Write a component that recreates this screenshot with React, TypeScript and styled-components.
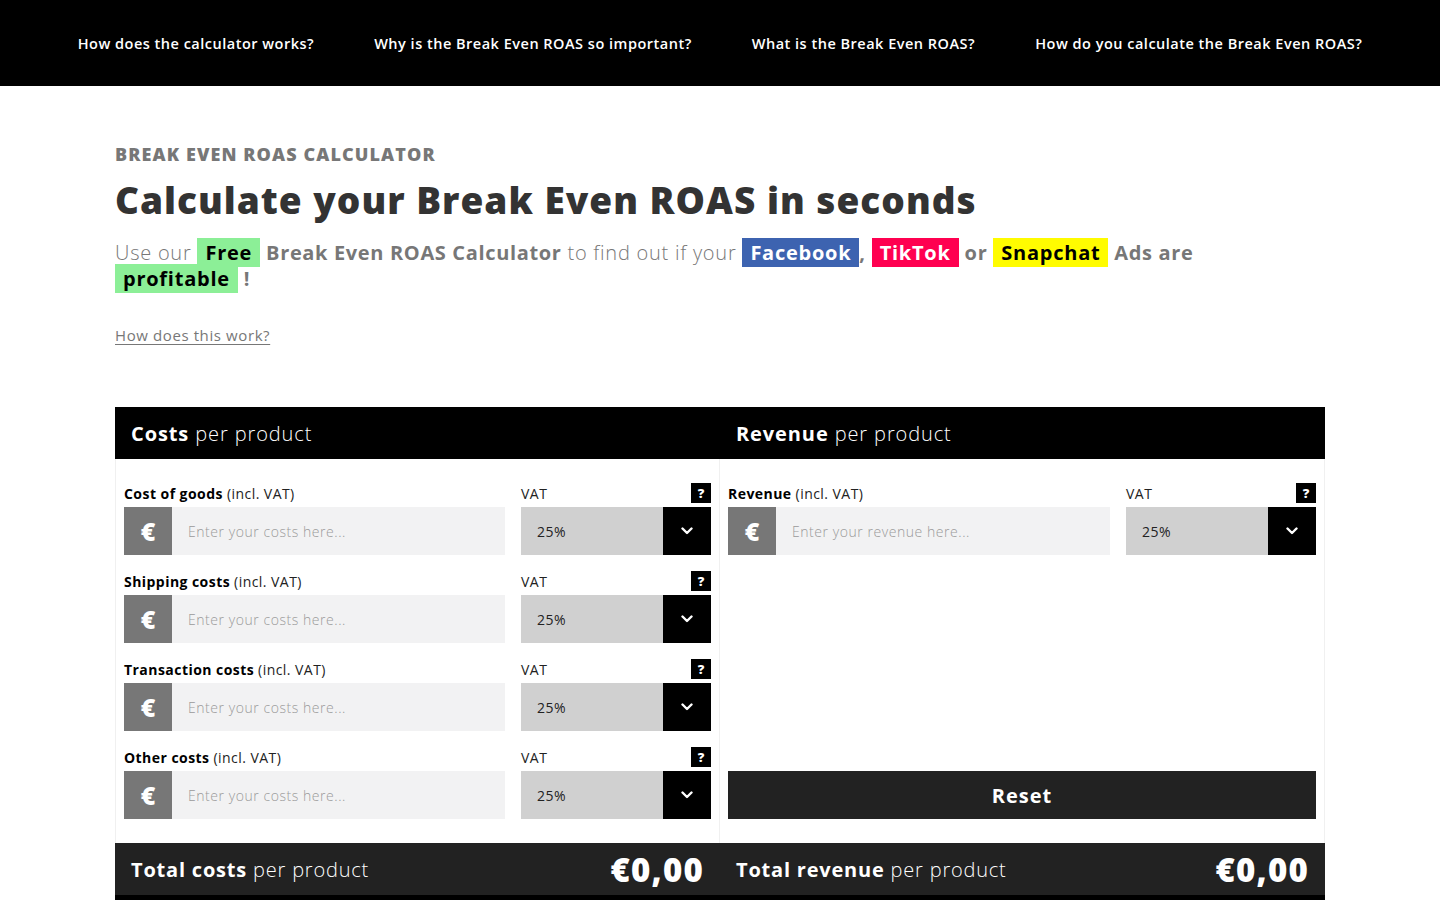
import styled, { createGlobalStyle } from 'styled-components';

const GlobalStyle = createGlobalStyle`
  body {
    margin: 0;
    background: #fff;
    font-family: 'Open Sans', 'Liberation Sans', sans-serif;
    color: #222;
    letter-spacing: 0.5px;
  }
  * {
    box-sizing: border-box;
  }
`;

const navLinks = [
  'How does the calculator works?',
  'Why is the Break Even ROAS so important?',
  'What is the Break Even ROAS?',
  'How do you calculate the Break Even ROAS?',
];

const costRows = ['Cost of goods', 'Shipping costs', 'Transaction costs', 'Other costs'];

function Chevron() {
  return (
    <svg width="12" height="8" viewBox="0 0 12 8" fill="none">
      <polyline
        points="1.5,1.5 6,6 10.5,1.5"
        stroke="#fff"
        strokeWidth="2.4"
        strokeLinecap="round"
        strokeLinejoin="round"
      />
    </svg>
  );
}

function Field({ name, placeholder }: { name: string; placeholder: string }) {
  return (
    <FieldGroup>
      <FieldLabel>
        <strong>{name}</strong> (incl. VAT)
      </FieldLabel>
      <VatLabel>
        VAT
        <HelpBox>?</HelpBox>
      </VatLabel>
      <AmountBox>
        <EuroBox>€</EuroBox>
        <AmountInput placeholder={placeholder} />
      </AmountBox>
      <VatSelect>
        <VatValue>25%</VatValue>
        <ChevronBox>
          <Chevron />
        </ChevronBox>
      </VatSelect>
    </FieldGroup>
  );
}

export default function App() {
  return (
    <>
      <GlobalStyle />
      <TopNav>
        {navLinks.map((l) => (
          <NavLink key={l} href="#">
            {l}
          </NavLink>
        ))}
      </TopNav>
      <Main>
        <Kicker>Break Even ROAS Calculator</Kicker>
        <Heading>Calculate your Break Even ROAS in seconds</Heading>
        <Intro>
          Use our <Mark $bg="#8cef97">Free</Mark> <b>Break Even ROAS Calculator</b> to find out if your{' '}
          <Mark $bg="#3d63b0" $color="#fff">Facebook</Mark><b>,</b>{' '}
          <Mark $bg="#ff0050" $color="#fff">TikTok</Mark> <b>or</b>{' '}
          <Mark $bg="#fffc00">Snapchat</Mark> <b>Ads are</b>{' '}
          <Mark $bg="#8cef97">profitable</Mark> <b>!</b>
        </Intro>
        <HowLink href="#">How does this work?</HowLink>

        <Panel>
          <PanelHeader>
            <HeaderCell>
              <b>Costs</b> per product
            </HeaderCell>
            <HeaderCell>
              <b>Revenue</b> per product
            </HeaderCell>
          </PanelHeader>
          <PanelBody>
            <Column $first>
              {costRows.map((r) => (
                <Field key={r} name={r} placeholder="Enter your costs here..." />
              ))}
            </Column>
            <Column $spread>
              <Field name="Revenue" placeholder="Enter your revenue here..." />
              <ResetButton>Reset</ResetButton>
            </Column>
          </PanelBody>
          <PanelFooter>
            <TotalCell>
              <span>
                <b>Total costs</b> per product
              </span>
              <TotalAmount>€0,00</TotalAmount>
            </TotalCell>
            <TotalCell>
              <span>
                <b>Total revenue</b> per product
              </span>
              <TotalAmount>€0,00</TotalAmount>
            </TotalCell>
          </PanelFooter>
          <PanelBottom />
        </Panel>
      </Main>
    </>
  );
}

const TopNav = styled.nav`
  height: 86px;
  background: #000;
  display: flex;
  align-items: center;
  justify-content: center;
  gap: 60px;
`;

const NavLink = styled.a`
  color: #fff;
  text-decoration: none;
  font-family: 'Open Sans', sans-serif;
  font-size: 14.5px;
  font-weight: 600;
  letter-spacing: 0.5px;
`;

const Main = styled.main`
  width: 1210px;
  margin: 0 auto;
  padding-top: 56px;
  display: flex;
  flex-direction: column;
  align-items: flex-start;
`;

const Kicker = styled.div`
  font-size: 18px;
  line-height: 24px;
  font-weight: 800;
  color: #777;
  text-transform: uppercase;
  letter-spacing: 1.1px;
`;

const Heading = styled.h1`
  margin: 12px 0 0;
  font-size: 37px;
  line-height: 44px;
  font-weight: 800;
  color: #333;
  letter-spacing: 1px;
`;

const Intro = styled.p`
  margin: 18px 0 0;
  max-width: 1140px;
  font-size: 20px;
  line-height: 26px;
  font-weight: 300;
  color: #777;
  letter-spacing: 0.75px;

  b {
    font-weight: 700;
    letter-spacing: 0.65px;
  }
`;

const Mark = styled.span<{ $bg: string; $color?: string }>`
  background: ${(p) => p.$bg};
  color: ${(p) => p.$color || '#000'};
  font-weight: 700;
  letter-spacing: 0.75px;
  padding: 1px 8px;
`;

const HowLink = styled.a`
  margin-top: 33px;
  font-size: 15px;
  line-height: 20px;
  font-weight: 400;
  color: #777;
  letter-spacing: 0.6px;
  text-decoration: underline;
  text-underline-offset: 3px;
`;

const Panel = styled.section`
  margin-top: 62px;
  width: 100%;
`;

const PanelHeader = styled.div`
  display: grid;
  grid-template-columns: 1fr 1fr;
  height: 52px;
  background: #000;
  color: #fff;
`;

const HeaderCell = styled.div`
  display: flex;
  align-items: center;
  gap: 6px;
  padding-left: 16px;
  font-size: 20px;
  font-weight: 300;
  letter-spacing: 0.9px;

  b {
    font-weight: 700;
  }
`;

const PanelBody = styled.div`
  display: grid;
  grid-template-columns: 1fr 1fr;
`;

const Column = styled.div<{ $spread?: boolean; $first?: boolean }>`
  display: flex;
  flex-direction: column;
  justify-content: ${(p) => (p.$spread ? 'space-between' : 'flex-start')};
  gap: 16px;
  padding: 24px 8px;
  border-left: ${(p) => (p.$first ? '1px solid #f0f0f0' : 'none')};
  border-right: 1px solid #f0f0f0;
`;

const FieldGroup = styled.div`
  display: grid;
  grid-template-columns: 1fr 190px;
  column-gap: 16px;
  row-gap: 4px;
`;

const FieldLabel = styled.div`
  display: flex;
  align-items: center;
  gap: 4px;
  height: 20px;
  font-size: 14px;
  font-weight: 400;
  color: #222;
  letter-spacing: 0.45px;

  strong {
    font-weight: 700;
    color: #000;
  }
`;

const VatLabel = styled.div`
  display: flex;
  align-items: center;
  justify-content: space-between;
  height: 20px;
  font-size: 14px;
  color: #222;
`;

const HelpBox = styled.span`
  width: 20px;
  height: 20px;
  background: #000;
  color: #fff;
  font-size: 13px;
  font-weight: 800;
  letter-spacing: 0;
  display: flex;
  align-items: center;
  justify-content: center;
`;

const AmountBox = styled.div`
  display: flex;
  height: 48px;
`;

const EuroBox = styled.div`
  width: 48px;
  flex: none;
  background: #777;
  color: #fff;
  font-size: 25px;
  font-weight: 800;
  letter-spacing: 0;
  display: flex;
  align-items: center;
  justify-content: center;
`;

const AmountInput = styled.input`
  flex: 1;
  min-width: 0;
  border: none;
  outline: none;
  background: #f2f2f3;
  padding: 0 16px;
  font-family: 'Open Sans', sans-serif;
  font-size: 14px;
  font-weight: 300;
  letter-spacing: 0.55px;
  color: #222;

  &::placeholder {
    color: #9a9a9a;
  }
`;

const VatSelect = styled.div`
  display: flex;
  height: 48px;
  background: #d0d0d0;
`;

const VatValue = styled.div`
  flex: 1;
  display: flex;
  align-items: center;
  padding-left: 16px;
  font-size: 14px;
  color: #222;
`;

const ChevronBox = styled.div`
  width: 48px;
  background: #000;
  display: flex;
  align-items: center;
  justify-content: center;
`;

const ResetButton = styled.button`
  height: 48px;
  border: none;
  background: #222;
  color: #fff;
  font-family: 'Open Sans', sans-serif;
  font-size: 20px;
  font-weight: 700;
  letter-spacing: 1px;
  cursor: pointer;
`;

const PanelFooter = styled.div`
  display: grid;
  grid-template-columns: 1fr 1fr;
  height: 52px;
  background: #222;
  color: #fff;
`;

const TotalCell = styled.div`
  display: flex;
  align-items: center;
  justify-content: space-between;
  padding: 0 16px;
  font-size: 20px;
  font-weight: 300;
  letter-spacing: 0.8px;

  b {
    font-weight: 700;
  }
`;

const TotalAmount = styled.span`
  font-size: 33px;
  font-weight: 800;
  letter-spacing: 1.2px;
`;

const PanelBottom = styled.div`
  height: 40px;
  background: #000;
`;
